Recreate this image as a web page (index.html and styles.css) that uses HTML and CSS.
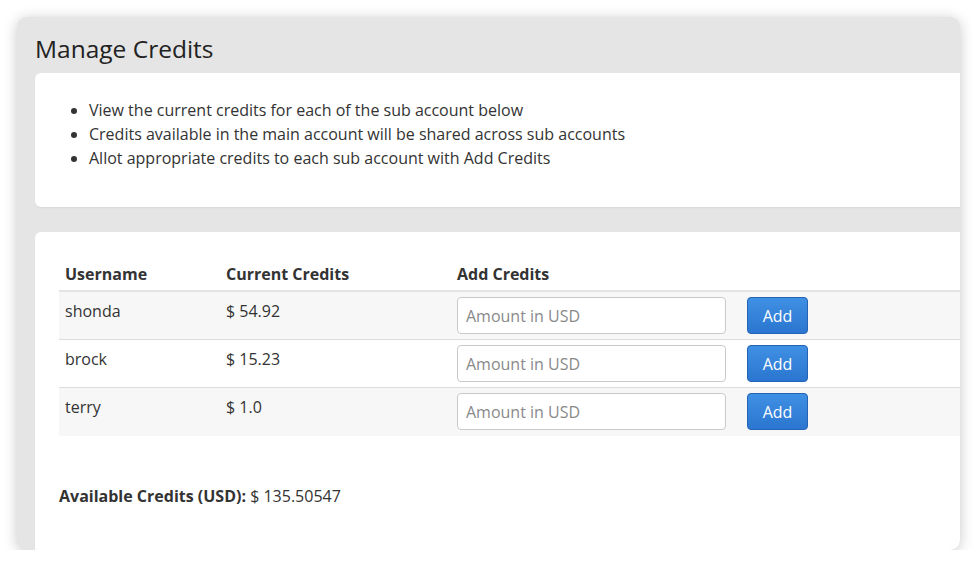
FILE: index.html
```html
<!DOCTYPE html>
<html lang="en">
<head>
    <meta charset="UTF-8">
    <meta name="viewport" content="width=device-width, initial-scale=1.0">
    <title>Manage Credits</title>
    <link rel="stylesheet" href="styles.css">
</head>
<body>
    <div class="window">
        <h1>Manage Credits</h1>

        <div class="card info-card">
            <ul>
                <li>View the current credits for each of the sub account below</li>
                <li>Credits available in the main account will be shared across sub accounts</li>
                <li>Allot appropriate credits to each sub account with Add Credits</li>
            </ul>
        </div>

        <div class="card credits-card">
            <table class="credits-table">
                <thead>
                    <tr>
                        <th class="col-user">Username</th>
                        <th class="col-credits">Current Credits</th>
                        <th class="col-add">Add Credits</th>
                        <th></th>
                    </tr>
                </thead>
                <tbody>
                    <tr>
                        <td>shonda</td>
                        <td>$ 54.92</td>
                        <td class="field"><input type="text" placeholder="Amount in USD"></td>
                        <td class="field"><button>Add</button></td>
                    </tr>
                    <tr>
                        <td>brock</td>
                        <td>$ 15.23</td>
                        <td class="field"><input type="text" placeholder="Amount in USD"></td>
                        <td class="field"><button>Add</button></td>
                    </tr>
                    <tr>
                        <td>terry</td>
                        <td>$ 1.0</td>
                        <td class="field"><input type="text" placeholder="Amount in USD"></td>
                        <td class="field"><button>Add</button></td>
                    </tr>
                </tbody>
            </table>

            <p class="available"><b>Available Credits (USD):</b> $ 135.50547</p>
        </div>
    </div>
</body>
</html>
```

FILE: styles.css
```css
* {
    box-sizing: border-box;
    margin: 0;
    padding: 0;
}

body {
    font-family: "Open Sans", "Liberation Sans", sans-serif;
    background-color: #ffffff;
    color: #333;
    font-size: 16px;
    line-height: 24px;
}

.window {
    margin: 17px 0 0 17px;
    width: 943px;
    height: 533px;
    background-color: #e5e5e5;
    border-radius: 10px;
    box-shadow: 0 2px 14px rgba(0, 0, 0, 0.22);
    padding-left: 18px;
    overflow: hidden;
    display: flex;
    flex-direction: column;
}

h1 {
    font-size: 24.5px;
    font-weight: normal;
    line-height: 32px;
    padding: 16px 0 8px;
    color: #222;
}

.card {
    background-color: #ffffff;
    border-radius: 6px 0 0 6px;
    box-shadow: 0 1px 2px rgba(0, 0, 0, 0.06);
}

.info-card {
    flex-shrink: 0;
    height: 134px;
    padding: 25px 20px 0;
}

.info-card ul {
    padding-left: 34px;
}

.credits-card {
    margin-top: 25px;
    flex: 1 0 330px;
    padding: 26px 0 0 24px;
}

.credits-table {
    width: 100%;
    border-collapse: collapse;
}

.credits-table th {
    text-align: left;
    font-weight: bold;
    padding: 4px 6px 4px;
    border-bottom: 2px solid #e3e3e3;
}

.credits-table td {
    padding: 7px 6px 0;
    vertical-align: top;
    height: 48px;
    border-top: 1px solid #dddddd;
}

.credits-table td.field {
    padding: 5px 6px 5px;
}

.credits-table tbody tr:nth-child(odd) {
    background-color: #f7f7f7;
}

.col-user {
    width: 161px;
}

.col-credits {
    width: 231px;
}

.col-add {
    width: 290px;
}

input {
    width: 269px;
    height: 37px;
    border: 1px solid #c9c9c9;
    border-radius: 4px;
    padding: 0 8px;
    font-family: inherit;
    font-size: 16px;
    color: #333;
    background-color: #fff;
}

input::placeholder {
    color: #8a8a8a;
}

button {
    width: 61px;
    height: 37px;
    background: linear-gradient(#3f90e4, #2b76d0);
    border: 1px solid #2463b5;
    border-radius: 4px;
    color: #ffffff;
    font-family: inherit;
    font-size: 16px;
    cursor: pointer;
}

.available {
    margin-top: 48px;
}
```
